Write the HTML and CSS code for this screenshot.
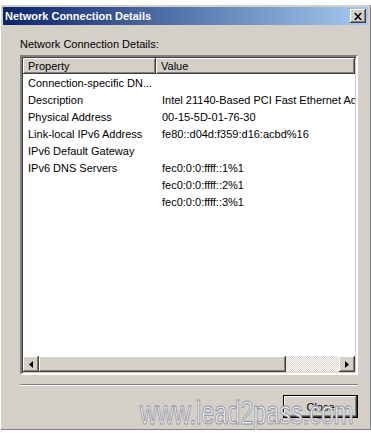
FILE: index.html
```html
<!DOCTYPE html>
<html>
<head>
  <meta charset="utf-8"/>
  <title>Network Connection Details</title>
  <link rel="stylesheet" href="styles.css">
</head>
<body>
  <div class="window">
    <div class="titlebar">
      <span class="title">Network Connection Details</span>
      <button class="title-close">
        <svg width="8" height="7" viewBox="0 0 8 7"><path d="M0 0h2l2 2.5L6 0h2L5 3.5 8 7H6L4 4.5 2 7H0l3-3.5z" fill="#000"/></svg>
      </button>
    </div>

    <div class="content">
      <div class="caption">Network Connection Details:</div>

      <div class="listview">
        <div class="lv-header">
          <div class="col col-prop">Property</div>
          <div class="col col-val">Value</div>
        </div>
        <div class="lv-body">
          <div class="row"><span class="prop">Connection-specific DN...</span><span class="val"></span></div>
          <div class="row"><span class="prop">Description</span><span class="val">Intel 21140-Based PCI Fast Ethernet Adapter (Emulated)</span></div>
          <div class="row"><span class="prop">Physical Address</span><span class="val">00-15-5D-01-76-30</span></div>
          <div class="row"><span class="prop">Link-local IPv6 Address</span><span class="val">fe80::d04d:f359:d16:acbd%16</span></div>
          <div class="row"><span class="prop">IPv6 Default Gateway</span><span class="val"></span></div>
          <div class="row"><span class="prop">IPv6 DNS Servers</span><span class="val">fec0:0:0:ffff::1%1</span></div>
          <div class="row"><span class="prop"></span><span class="val">fec0:0:0:ffff::2%1</span></div>
          <div class="row"><span class="prop"></span><span class="val">fec0:0:0:ffff::3%1</span></div>
        </div>
        <div class="hscroll">
          <div class="sb-btn">
            <svg width="4" height="7" viewBox="0 0 4 7"><path d="M4 0v7L0 3.5z" fill="#000"/></svg>
          </div>
          <div class="sb-thumb"></div>
          <div class="sb-track"></div>
          <div class="sb-btn">
            <svg width="4" height="7" viewBox="0 0 4 7"><path d="M0 0v7l4-3.5z" fill="#000"/></svg>
          </div>
        </div>
      </div>

      <div class="separator"></div>

      <div class="actions">
        <button class="btn-close">Close</button>
      </div>
    </div>

    <div class="watermark">www.lead2pass.com</div>
  </div>
</body>
</html>
```

FILE: styles.css
```css
body {
  margin: 0;
  background: #fff;
  font-family: "Liberation Sans", Arial, sans-serif;
  font-size: 11px;
  color: #000;
}
.window {
  position: relative;
  box-sizing: border-box;
  width: 371px;
  height: 426px;
  margin-top: 4px;
  padding: 3px;
  background: #d4d0c8;
  box-shadow: inset 1px 1px #fff, inset -1px -1px #808080;
  overflow: hidden;
}
.titlebar {
  display: flex;
  align-items: center;
  height: 18px;
  padding-left: 2px;
  padding-right: 2px;
  background: linear-gradient(to right, #0a246a, #a6caf0);
}
.title {
  flex: 1;
  color: #fff;
  font-weight: bold;
  font-size: 11px;
}
.title-close {
  display: flex;
  align-items: center;
  justify-content: center;
  width: 16px;
  height: 14px;
  padding: 0;
  border: none;
  background: #d4d0c8;
  box-shadow: inset -1px -1px #404040, inset 1px 1px #fff, inset -2px -2px #808080;
}
.content {
  padding: 0 10px 0 17px;
}
.caption {
  margin-top: 13px;
  margin-bottom: 4px;
  line-height: 13px;
}
.listview {
  display: flex;
  flex-direction: column;
  height: 320px;
  background: #fff;
  border: 2px solid;
  border-color: #808080 #fff #fff #808080;
  box-shadow: inset 1px 1px #404040, inset -1px -1px #d4d0c8;
  box-sizing: border-box;
  padding: 1px;
}
.lv-header {
  display: flex;
  height: 16px;
}
.col {
  box-sizing: border-box;
  padding-left: 5px;
  line-height: 16px;
  background: #d4d0c8;
  box-shadow: inset -1px -1px #404040, inset 1px 1px #fff, inset -2px -2px #808080;
}
.col-prop {
  width: 133px;
}
.col-val {
  flex: 1;
}
.lv-body {
  flex: 1;
  padding-top: 1px;
  overflow: hidden;
}
.row {
  display: flex;
  height: 17px;
  line-height: 17px;
  white-space: nowrap;
}
.prop {
  flex: 0 0 133px;
  box-sizing: border-box;
  padding-left: 5px;
  overflow: hidden;
}
.val {
  flex: 1;
  padding-left: 6px;
  overflow: hidden;
}
.hscroll {
  display: flex;
  height: 16px;
}
.sb-btn {
  display: flex;
  align-items: center;
  justify-content: center;
  width: 16px;
  background: #d4d0c8;
  box-shadow: inset -1px -1px #404040, inset 1px 1px #fff, inset -2px -2px #808080;
}
.sb-thumb {
  width: 247px;
  background: #d4d0c8;
  box-shadow: inset -1px -1px #404040, inset 1px 1px #fff, inset -2px -2px #808080;
}
.sb-track {
  flex: 1;
  background: repeating-conic-gradient(#d4d0c8 0 25%, #fff 0 50%) 0 0 / 2px 2px;
}
.separator {
  margin-top: 9px;
  height: 0;
  border-top: 1px solid #808080;
  border-bottom: 1px solid #fff;
}
.actions {
  display: flex;
  justify-content: flex-end;
  margin-top: 9px;
}
.btn-close {
  width: 75px;
  height: 23px;
  padding: 0;
  font-family: inherit;
  font-size: 11px;
  color: #000;
  background: #d4d0c8;
  border: 1px solid #000;
  box-shadow: inset -1px -1px #404040, inset 1px 1px #fff, inset -2px -2px #808080;
}
.watermark {
  position: absolute;
  left: 140px;
  top: 391px;
  font-size: 33px;
  line-height: 36px;
  color: #eef0f2;
  -webkit-text-stroke: 1px #8e949e;
  transform: scaleX(0.71);
  transform-origin: left top;
  white-space: nowrap;
}
```
